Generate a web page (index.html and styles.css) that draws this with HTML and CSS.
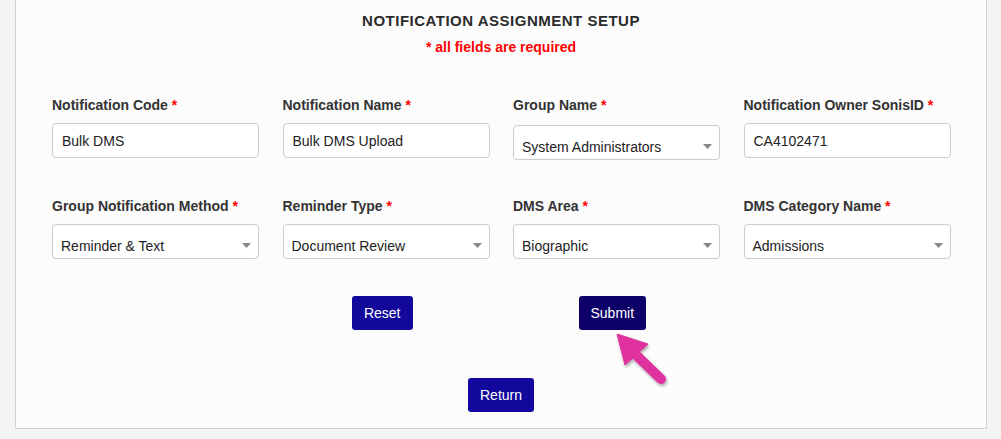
FILE: index.html
```html
<!DOCTYPE html>
<html lang="en">
<head>
<meta charset="utf-8">
<title>Notification Assignment Setup</title>
<link rel="stylesheet" href="styles.css">
</head>
<body>
<div class="card">
  <h1 class="title">NOTIFICATION ASSIGNMENT SETUP</h1>
  <p class="required-note">* all fields are required</p>

  <div class="form-grid">
    <div class="field">
      <label class="label">Notification Code <span class="req">*</span></label>
      <div class="input">Bulk DMS</div>
    </div>
    <div class="field">
      <label class="label">Notification Name <span class="req">*</span></label>
      <div class="input">Bulk DMS Upload</div>
    </div>
    <div class="field">
      <label class="label">Group Name <span class="req">*</span></label>
      <div class="select select-offset"><span>System Administrators</span><svg class="caret" width="9" height="5" viewBox="0 0 9 5"><path d="M0 0H9L4.5 5Z" fill="#888"/></svg></div>
    </div>
    <div class="field">
      <label class="label">Notification Owner SonisID <span class="req">*</span></label>
      <div class="input">CA4102471</div>
    </div>

    <div class="field">
      <label class="label">Group Notification Method <span class="req">*</span></label>
      <div class="select"><span>Reminder &amp; Text</span><svg class="caret" width="9" height="5" viewBox="0 0 9 5"><path d="M0 0H9L4.5 5Z" fill="#888"/></svg></div>
    </div>
    <div class="field">
      <label class="label">Reminder Type <span class="req">*</span></label>
      <div class="select"><span>Document Review</span><svg class="caret" width="9" height="5" viewBox="0 0 9 5"><path d="M0 0H9L4.5 5Z" fill="#888"/></svg></div>
    </div>
    <div class="field">
      <label class="label">DMS Area <span class="req">*</span></label>
      <div class="select"><span>Biographic</span><svg class="caret" width="9" height="5" viewBox="0 0 9 5"><path d="M0 0H9L4.5 5Z" fill="#888"/></svg></div>
    </div>
    <div class="field">
      <label class="label">DMS Category Name <span class="req">*</span></label>
      <div class="select"><span>Admissions</span><svg class="caret" width="9" height="5" viewBox="0 0 9 5"><path d="M0 0H9L4.5 5Z" fill="#888"/></svg></div>
    </div>
  </div>

  <div class="actions">
    <button class="btn">Reset</button>
    <button class="btn btn-active">Submit</button>
  </div>
  <div class="actions-return">
    <button class="btn">Return</button>
  </div>
</div>

<svg class="pointer-arrow" width="70" height="70" viewBox="0 0 70 70">
  <defs>
    <filter id="sh" x="-20%" y="-20%" width="150%" height="150%">
      <feDropShadow dx="1" dy="2" stdDeviation="1.5" flood-color="#000" flood-opacity="0.35"/>
    </filter>
  </defs>
  <g filter="url(#sh)" fill="#e0309e" stroke="#e0309e">
    <line x1="30" y1="29" x2="56" y2="54" stroke-width="10" stroke-linecap="round"/>
    <polygon points="12,9 20,40 43,19" stroke-width="1" stroke-linejoin="round"/>
  </g>
</svg>
</body>
</html>
```

FILE: styles.css
```css
* { box-sizing: border-box; }

html, body {
  margin: 0;
  padding: 0;
}

body {
  background: #f4f4f4;
  font-family: "Liberation Sans", Arial, sans-serif;
  color: #333;
  position: relative;
  width: 1001px;
  height: 439px;
  overflow: hidden;
}

.card {
  margin-left: 15px;
  width: 972px;
  height: 429px;
  background: #fcfcfc;
  border: 1px solid #d3d3d3;
  border-top: none;
  display: flex;
  flex-direction: column;
}

.title {
  margin: 13px 0 0;
  font-size: 15px;
  line-height: 16px;
  font-weight: bold;
  letter-spacing: 0.5px;
  text-align: center;
  color: #2b2b2b;
}

.required-note {
  margin: 10px 0 0;
  font-size: 14px;
  line-height: 16px;
  font-weight: bold;
  color: #ff0000;
  text-align: center;
}

.form-grid {
  margin-top: 42px;
  padding-left: 36px;
  display: grid;
  grid-template-columns: repeat(4, 230.5px);
  row-gap: 40px;
}

.field {
  display: flex;
  flex-direction: column;
}

.label {
  font-size: 14px;
  line-height: 16px;
  font-weight: bold;
  color: #333;
  margin-bottom: 10px;
}

.req {
  color: #f00;
}

.input,
.select {
  width: 207px;
  height: 35px;
  background: #fff;
  border: 1px solid #ccc;
  border-radius: 4px;
  font-size: 14px;
  color: #222;
}

.input {
  display: flex;
  align-items: center;
  padding-left: 9px;
}

.select {
  display: flex;
  align-items: center;
  justify-content: space-between;
  padding: 8px 7px 0 8px;
}

.select-offset {
  margin-top: 2px;
  margin-bottom: -2px;
}

.caret {
  display: block;
}

.actions {
  margin-top: 37px;
  display: flex;
  justify-content: center;
  gap: 166px;
  padding-right: 4px;
}

.actions-return {
  margin-top: 48px;
  display: flex;
  justify-content: center;
}

.btn {
  height: 34px;
  padding: 0 12px;
  border: none;
  border-radius: 3px;
  background: #12089c;
  color: #fff;
  font-family: "Liberation Sans", Arial, sans-serif;
  font-size: 14px;
}

.btn-active {
  background: #0d0069;
}

.pointer-arrow {
  position: absolute;
  left: 605px;
  top: 325px;
}
```
